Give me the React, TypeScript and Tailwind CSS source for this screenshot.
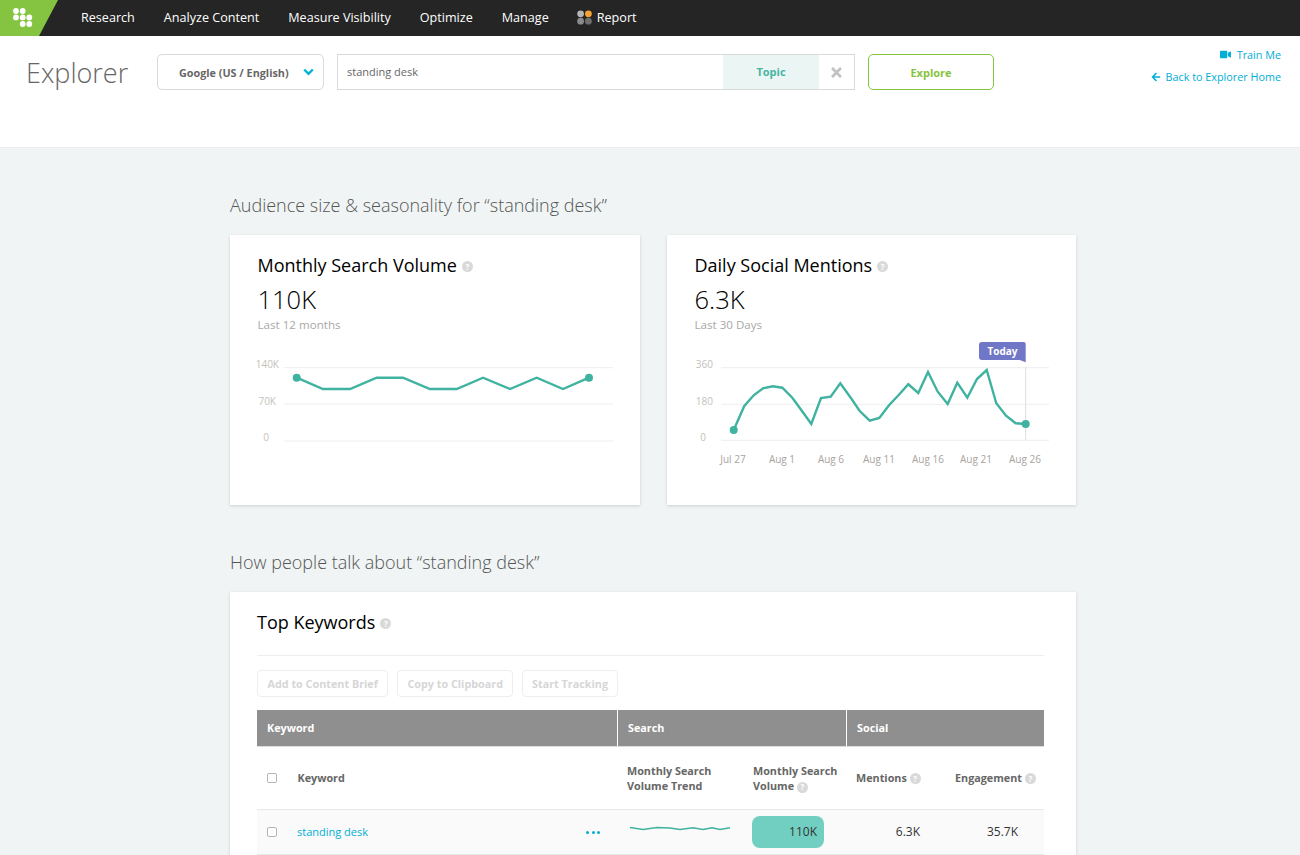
import { FaArrowLeft, FaTimes, FaVideo } from 'react-icons/fa';

const NAV_ITEMS = ['Research', 'Analyze Content', 'Measure Visibility', 'Optimize', 'Manage'];

const DAILY_POINTS =
  '66.7,100 77.3,76 86.7,65.3 96,58.3 105.7,56.3 115.3,57.7 125.3,67.7 135,81 144.3,94 154,68 163.7,66.7 173.3,53.3 183,66.7 192.7,81 202.7,90.7 212.3,88 222,75.3 231.7,65 241.3,54.3 251.3,63 261,42 270.7,61.7 280.7,74 290.3,52.7 300.3,67.7 310,49 319.7,40 329.3,73.3 339,85.7 348.7,93.3 358.7,94';

const DAILY_LABELS = [
  { x: 66, text: 'Jul 27' },
  { x: 115, text: 'Aug 1' },
  { x: 164, text: 'Aug 6' },
  { x: 212, text: 'Aug 11' },
  { x: 261, text: 'Aug 16' },
  { x: 309, text: 'Aug 21' },
  { x: 358, text: 'Aug 26' },
];

const Help = () => (
  <span className="inline-flex h-[11px] w-[11px] items-center justify-center rounded-full bg-[#d9d9d9] text-[8px] font-bold leading-none text-white">
    ?
  </span>
);

const Logo = () => (
  <svg width="60" height="36" viewBox="0 0 60 36" className="shrink-0">
    <polygon points="0,0 58,0 39,36 0,36" fill="#85c440" />
    {[
      [16, 11],
      [22.7, 11],
      [16, 17.4],
      [22.7, 17.4],
      [29.3, 17.4],
      [22.7, 24],
      [29.3, 24],
    ].map(([cx, cy]) => (
      <circle key={`${cx}-${cy}`} cx={cx} cy={cy} r="2.9" fill="#fff" />
    ))}
  </svg>
);

const TopNav = () => (
  <nav className="flex h-9 items-center bg-[#252525] text-[12.6px] font-medium text-white">
    <Logo />
    <div className="ml-[21px] flex items-center gap-[29px]">
      {NAV_ITEMS.map((item) => (
        <span key={item}>{item}</span>
      ))}
      <span className="-ml-px flex items-center gap-[5px]">
        <svg width="15" height="15" viewBox="0 0 15 15">
          <circle cx="3.6" cy="3.8" r="3.4" fill="#b5b5b5" />
          <circle cx="11.4" cy="3.8" r="3.4" fill="#f5a431" />
          <circle cx="3.6" cy="11.2" r="3.4" fill="#8b8b8b" />
          <circle cx="11.4" cy="11.2" r="3.4" fill="#6e6e6e" />
        </svg>
        Report
      </span>
    </div>
  </nav>
);

const SearchHeader = () => (
  <header className="flex h-[112px] border-b border-[#e9eded] bg-white">
    <h1 className="ml-[26px] mt-[18px] w-[131px] text-[27px] font-light leading-[38px] text-[#666]">
      Explorer
    </h1>
    <div className="mt-[18px] flex h-9 w-[167px] items-center rounded-[5px] border border-[#d9d9d9] pl-[21px] text-[10.8px] font-bold text-[#666]">
      <span className="pt-[2px]">Google (US / English)</span>
      <svg width="11" height="8" viewBox="0 0 11 8" className="ml-[14px]">
        <polyline points="1.2,1.5 5.5,5.8 9.8,1.5" fill="none" stroke="#00b4d8" strokeWidth="2.4" />
      </svg>
    </div>
    <div className="ml-[13px] mt-[18px] flex h-9 w-[518px] items-stretch border border-[#d9d9d9] text-[11px] text-[#666]">
      <span className="flex flex-1 items-center pl-[9px]">standing desk</span>
      <span className="flex w-[96px] items-center justify-center bg-[#ebf5f3] text-[11px] font-bold text-[#45b5a3]">
        Topic
      </span>
      <span className="flex w-[35px] items-center justify-center text-[#c2c2c2]">
        <FaTimes className="h-[15px] w-[15px]" />
      </span>
    </div>
    <button className="ml-[13px] mt-[18px] h-9 w-[126px] rounded-[5px] border border-[#85c440] pt-[2px] text-[11px] font-bold text-[#85c440]">
      Explore
    </button>
    <div className="ml-auto mr-[19px] mt-[11px] flex flex-col items-end gap-[7px] text-[10.8px] leading-[15px] text-[#00aed6]">
      <span className="flex items-center gap-[6px]">
        <FaVideo className="h-[11px] w-[11px]" />
        Train Me
      </span>
      <span className="flex items-center gap-[5px]">
        <FaArrowLeft className="h-[10px] w-[10px]" />
        Back to Explorer Home
      </span>
    </div>
  </header>
);

const MonthlyChart = () => (
  <svg width="410" height="130" viewBox="0 0 410 130" className="block">
    {[34.7, 71, 108].map((y) => (
      <line key={y} x1="54" x2="383" y1={y} y2={y} stroke="#eeeeee" strokeWidth="1" />
    ))}
    <g fill="#c4bfbb" fontSize="10" textAnchor="end">
      <text x="49" y="34.5">140K</text>
      <text x="46" y="71.5">70K</text>
      <text x="39" y="107.5">0</text>
    </g>
    <polyline
      points="66.7,44.7 93,56 120,56 146.7,44.7 173,44.7 200,56 226.7,56 253,44.7 280,56 306.7,44.7 333,56 359,44.7"
      fill="none"
      stroke="#3fb2a0"
      strokeWidth="2.4"
    />
    <circle cx="66.7" cy="44.7" r="4" fill="#3fb2a0" />
    <circle cx="359" cy="44.7" r="4" fill="#3fb2a0" />
  </svg>
);

const DailyChart = () => (
  <svg width="409" height="150" viewBox="0 0 409 150" className="-mt-[3px] block">
    {[37.7, 74.3, 110.3].map((y) => (
      <line key={y} x1="54" x2="382" y1={y} y2={y} stroke="#eeeeee" strokeWidth="1" />
    ))}
    <line x1="358.7" x2="358.7" y1="37" y2="110" stroke="#dddddd" strokeWidth="1" />
    <g fill="#c4bfbb" fontSize="10" textAnchor="end">
      <text x="46" y="37.5">360</text>
      <text x="46" y="75">180</text>
      <text x="39" y="110.5">0</text>
    </g>
    <polyline points={DAILY_POINTS} fill="none" stroke="#3fb2a0" strokeWidth="2.4" />
    <circle cx="66.7" cy="100" r="4" fill="#3fb2a0" />
    <circle cx="358.7" cy="94" r="4" fill="#3fb2a0" />
    <path
      d="M312,15 a3,3 0 0 1 3,-3 h41.7 a2,2 0 0 1 2,2 v18.3 l-6,-2.3 h-37.7 a3,3 0 0 1 -3,-3 z"
      fill="#7077c6"
    />
    <text x="335.5" y="25" fill="#fff" fontSize="10" fontWeight="700" textAnchor="middle">
      Today
    </text>
    <g fill="#a8a29e" fontSize="10" textAnchor="middle">
      {DAILY_LABELS.map((label) => (
        <text key={label.text} x={label.x} y="132.5">
          {label.text}
        </text>
      ))}
    </g>
  </svg>
);

const StatCard = ({
  title,
  value,
  period,
  children,
}: {
  title: string;
  value: string;
  period: string;
  children: React.ReactNode;
}) => (
  <section className="h-[270px] bg-white shadow-[0_1px_3px_rgba(0,0,0,0.15)]">
    <div className="px-[27.5px] pt-[18px]">
      <h3 className="flex items-center gap-[5px] text-[18px] leading-[24px] text-black">
        {title}
        <span className="mt-[3px] flex">
          <Help />
        </span>
      </h3>
      <div className="mt-[5px] text-[25.5px] font-light leading-[34px] text-black">{value}</div>
      <div className="mt-px text-[11.6px] leading-[16px] text-[#a8a8a8]">{period}</div>
    </div>
    {children}
  </section>
);

const Sparkline = () => (
  <svg width="100" height="8" viewBox="0 0 100 8" className="block">
    <polyline
      points="0,2.5 13,4.5 27,2.5 40,3 50,4.5 63,2.7 73,4.5 82,2.7 90,4.5 100,2.7"
      fill="none"
      stroke="#3fb2a0"
      strokeWidth="1.6"
    />
  </svg>
);

const Checkbox = () => (
  <span className="block h-[10px] w-[10px] rounded-[2px] border border-[#b5b5b5] bg-white" />
);

const KeywordsCard = () => (
  <section className="mt-[17px] bg-white pb-[32px] pl-[27px] pr-[32px] pt-[18px] shadow-[0_1px_3px_rgba(0,0,0,0.15)]">
    <h3 className="flex items-center gap-[5px] border-b border-[#eeeeee] pb-[21px] text-[18px] leading-[24px] text-black">
      Top Keywords
      <span className="mt-[3px] flex">
        <Help />
      </span>
    </h3>
    <div className="mt-[14px] flex gap-[9px] text-[10.8px] font-bold text-[#d6d6d6]">
      <span className="flex h-[27px] items-center rounded-[4px] border border-[#eeeeee] px-[9.5px] pt-px">
        Add to Content Brief
      </span>
      <span className="flex h-[27px] items-center rounded-[4px] border border-[#eeeeee] px-[9px] pt-px">
        Copy to Clipboard
      </span>
      <span className="flex h-[27px] items-center rounded-[4px] border border-[#eeeeee] px-[9px] pt-px">
        Start Tracking
      </span>
    </div>
    <div className="mt-[13px] grid h-[37px] grid-cols-[360px_229px_198px] border-b border-[#dcdcdc] bg-[#8f8f8f] text-[10.8px] font-bold text-white">
      <span className="flex items-center pl-[10px]">Keyword</span>
      <span className="flex items-center border-l border-white pl-[10px]">Search</span>
      <span className="flex items-center border-l border-white pl-[10px]">Social</span>
    </div>
    <div className="grid h-[63px] grid-cols-[40px_330px_125px_103px_99px_90px] items-center border-b border-[#e8e8e8] text-[10.8px] font-bold leading-[15px] text-[#666]">
      <span className="pl-[10px]">
        <Checkbox />
      </span>
      <span className="pb-[2px] pl-[0.5px]">Keyword</span>
      <span>
        Monthly Search
        <br />
        Volume Trend
      </span>
      <span className="pl-px">
        Monthly Search
        <br />
        Volume <Help />
      </span>
      <span className="pb-[2px] pl-px">
        Mentions <Help />
      </span>
      <span className="pb-[2px] pl-px">
        Engagement <Help />
      </span>
    </div>
    <div className="grid h-[45px] grid-cols-[40px_330px_125px_103px_99px_90px] items-center border-b border-[#e8e8e8] bg-[#fafafa] text-[11px]">
      <span className="pl-[10px]">
        <Checkbox />
      </span>
      <span className="flex items-center justify-between pr-[27px] text-[#00aed6]">
        standing desk
        <span className="flex gap-[2.5px]">
          <i className="block h-[3px] w-[3px] rounded-full bg-[#00aed6]" />
          <i className="block h-[3px] w-[3px] rounded-full bg-[#00aed6]" />
          <i className="block h-[3px] w-[3px] rounded-full bg-[#00aed6]" />
        </span>
      </span>
      <span className="pb-[6px] pl-[3px]">
        <Sparkline />
      </span>
      <span>
        <span className="flex h-[32px] w-[72px] items-center justify-end rounded-[8px] bg-[#70cfc1] pr-[7px] text-[12px] text-[#333]">
          110K
        </span>
      </span>
      <span className="pr-[34px] text-right text-[12px] text-[#333]">6.3K</span>
      <span className="pr-[26px] text-right text-[12px] text-[#333]">35.7K</span>
    </div>
  </section>
);

export default function App() {
  return (
    <div className="h-[855px] overflow-hidden bg-[#f0f4f4] font-['Open_Sans',sans-serif]">
      <TopNav />
      <SearchHeader />
      <main className="ml-[230px] w-[846px]">
        <h2 className="mt-[44px] text-[18px] font-light leading-[26px] text-[#555]">
          Audience size &amp; seasonality for “standing desk”
        </h2>
        <div className="mt-[17px] grid grid-cols-[410px_409px] gap-x-[27px]">
          <StatCard title="Monthly Search Volume" value="110K" period="Last 12 months">
            <MonthlyChart />
          </StatCard>
          <StatCard title="Daily Social Mentions" value="6.3K" period="Last 30 Days">
            <DailyChart />
          </StatCard>
        </div>
        <h2 className="mt-[44px] text-[18px] font-light leading-[26px] text-[#555]">
          How people talk about “standing desk”
        </h2>
        <KeywordsCard />
      </main>
    </div>
  );
}
